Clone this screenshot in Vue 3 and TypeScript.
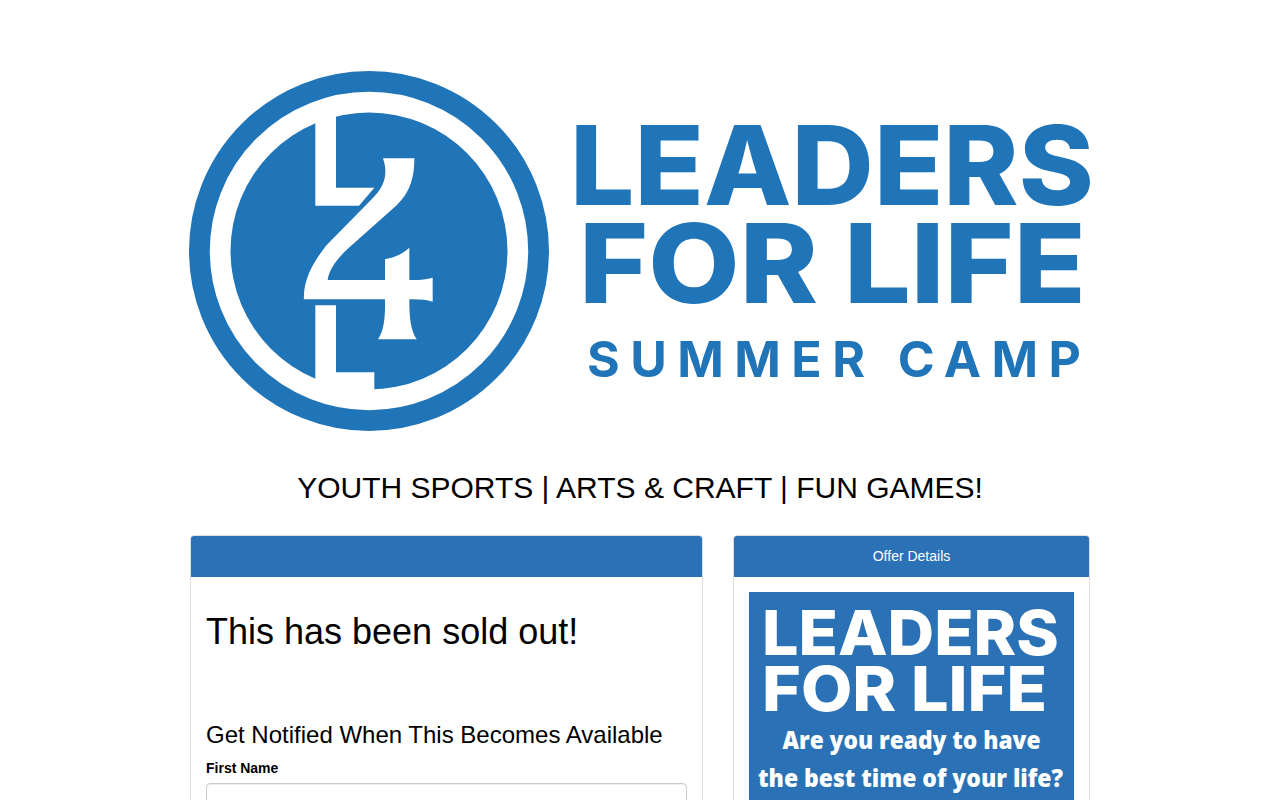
<script setup lang="ts">
const fields: string[] = ['First Name']
</script>

<template>
  <div class="page">
    <div class="wrap">
      <svg class="logo" viewBox="190 60 900 384" width="900" height="384" role="img" aria-label="Leaders for Life Summer Camp">
        <circle cx="369" cy="251" r="169.6" fill="none" stroke="#2074b8" stroke-width="20.8" />
        <circle cx="369" cy="251" r="138.5" fill="#2074b8" />
        <g transform="translate(180 60) scale(.33333)" fill="#fff">
          <path d="M406 130H468V383H583L537 437H406Z" />
          <path d="M406 736H468V937H583V1010H406Z" />
          <path d="M609 295H703C703 350 692 395 650 436L505 565C470 598 447 628 443 660H615V598C645 592 668 581 688 563V660C715 661 738 659 758 653V725C738 719 715 717 688 718C688 775 692 810 710 838H594C612 810 616 775 615 718H372C372 690 372 640 440 555L575 418C612 382 626 345 609 295Z" />
        </g>
        <g class="wordmark" fill="#2074b8">
          <text x="570" y="205" font-size="110" textLength="524" lengthAdjust="spacingAndGlyphs">LEADERS</text>
          <text x="579" y="303" font-size="110" textLength="507" lengthAdjust="spacingAndGlyphs">FOR LIFE</text>
          <text class="sub" x="587" y="377" font-size="50" textLength="494" lengthAdjust="spacing">SUMMER CAMP</text>
        </g>
      </svg>

      <h2 class="tagline">YOUTH SPORTS | ARTS &amp; CRAFT | FUN GAMES!</h2>

      <div class="columns">
        <section class="card main">
          <header class="card-head"></header>
          <div class="card-body">
            <h1 class="sold">This has been sold out!</h1>
            <h3 class="notify">Get Notified When This Becomes Available</h3>
            <div v-for="f in fields" :key="f" class="field">
              <label class="label">{{ f }}</label>
              <input class="input" type="text" />
            </div>
          </div>
        </section>

        <aside class="card side">
          <header class="card-head">Offer Details</header>
          <div class="card-body">
            <svg class="banner" viewBox="0 0 325 325" width="325" height="325" role="img" aria-label="Leaders for Life">
              <rect width="325" height="325" fill="#2a72b5" />
              <g class="banner-big" fill="#fff">
                <text x="13" y="63" font-size="62" textLength="297" lengthAdjust="spacingAndGlyphs">LEADERS</text>
                <text x="13" y="119" font-size="62" textLength="285" lengthAdjust="spacingAndGlyphs">FOR LIFE</text>
              </g>
              <g class="banner-small" fill="#fff" text-anchor="middle">
                <text x="162.5" y="157" font-size="24" textLength="258" lengthAdjust="spacingAndGlyphs">Are you ready to have</text>
                <text x="161.5" y="195" font-size="24" textLength="305" lengthAdjust="spacingAndGlyphs">the best time of your life?</text>
              </g>
            </svg>
          </div>
        </aside>
      </div>
    </div>
  </div>
</template>

<style>
html, body { margin: 0; background: #fff; }
</style>

<style scoped>
.page {
  height: 800px;
  overflow: hidden;
  font-family: "Liberation Sans", Arial, sans-serif;
  color: #000;
}
.wrap {
  width: 900px;
  margin: 0 auto;
  padding-top: 60px;
}
.logo { display: block; overflow: visible; }
.wordmark text { font-family: Inter, "Liberation Sans", sans-serif; font-weight: 800; }
.wordmark .sub { font-weight: 700; }
.tagline {
  margin: 25px 0 0;
  text-align: center;
  font-size: 30px;
  font-weight: 400;
  line-height: 38px;
}
.columns {
  display: flex;
  gap: 30px;
  margin-top: 28px;
}
.card {
  box-sizing: border-box;
  border: 1px solid #ddd;
  border-radius: 4px;
  overflow: hidden;
  background: #fff;
}
.main { width: 513px; }
.side { width: 357px; }
.card-head {
  height: 41px;
  background: #2a72b5;
  color: #fff;
  font-size: 14px;
  line-height: 41px;
  text-align: center;
}
.card-body { padding: 15px; }
.sold {
  margin: 20px 0 0;
  font-size: 36px;
  font-weight: 400;
  line-height: 40px;
}
.notify {
  margin: 68px 0 0;
  font-size: 24px;
  font-weight: 400;
  line-height: 30px;
}
.field { margin-top: 8px; }
.label {
  display: block;
  font-size: 14px;
  font-weight: 700;
  line-height: 20px;
  margin-bottom: 5px;
}
.input {
  display: block;
  box-sizing: border-box;
  width: 100%;
  height: 34px;
  border: 1px solid #ccc;
  border-radius: 4px;
  box-shadow: inset 0 1px 1px rgba(0, 0, 0, .075);
}
.banner { display: block; }
.banner-big text { font-family: Inter, "Open Sans", sans-serif; font-weight: 800; }
.banner-small text { font-family: "Open Sans", "Noto Sans", sans-serif; font-weight: 800; }
</style>
